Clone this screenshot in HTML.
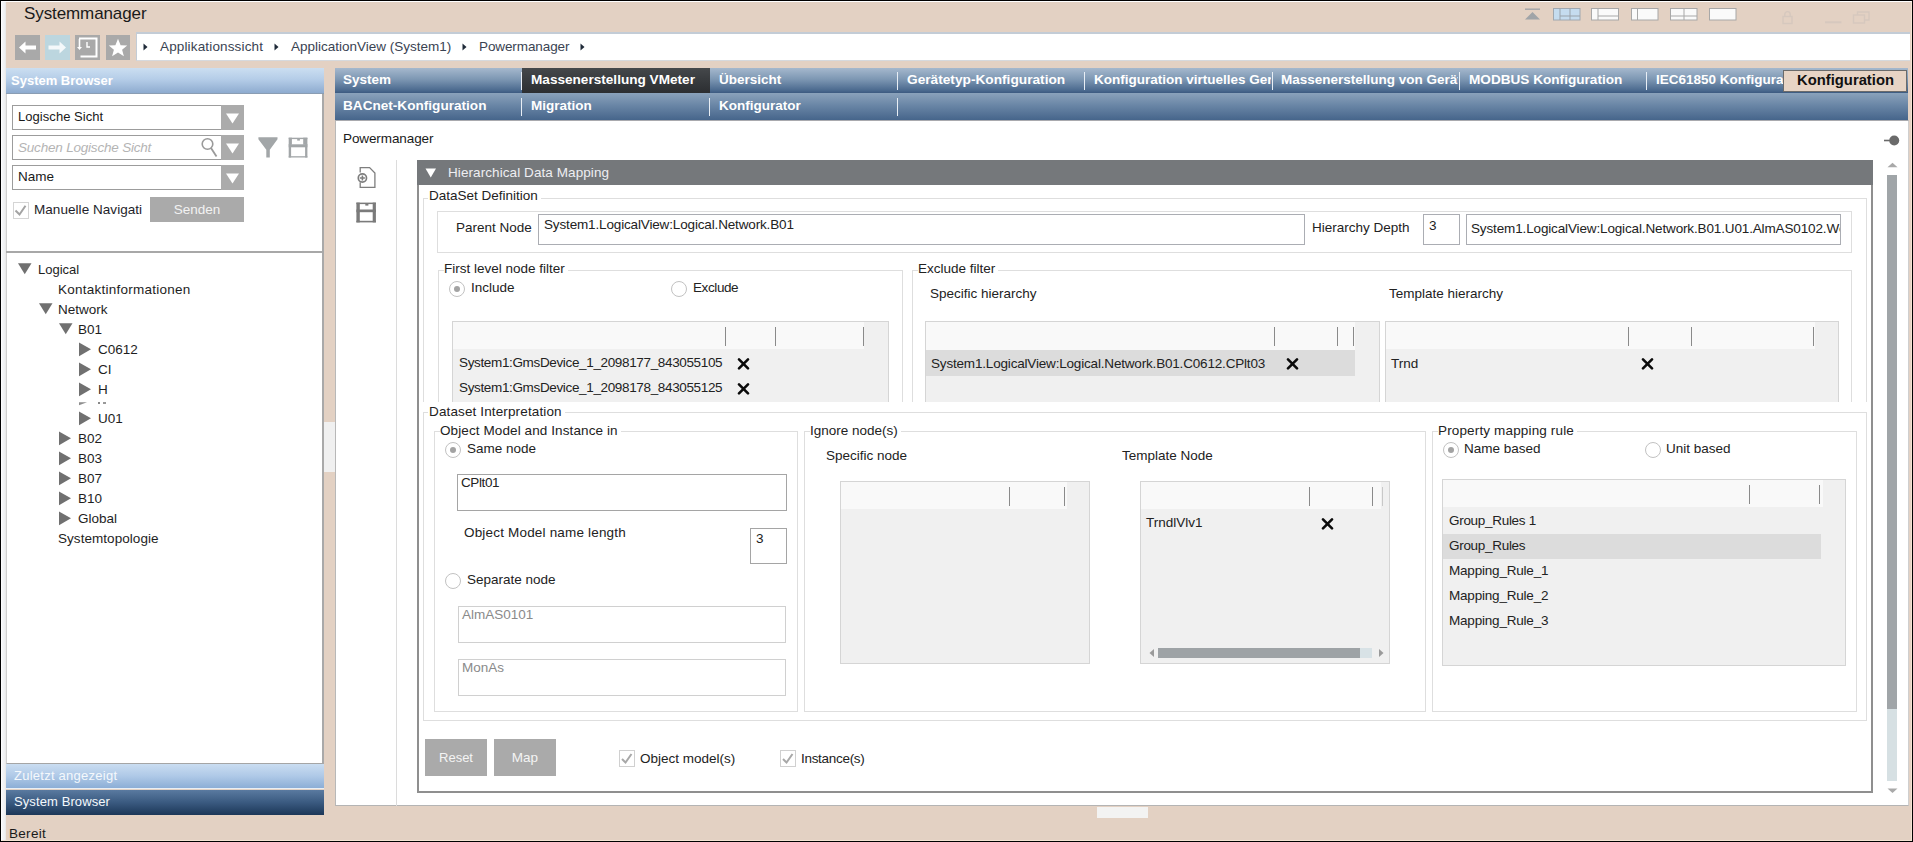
<!DOCTYPE html>
<html><head><meta charset="utf-8">
<style>
*{box-sizing:border-box;margin:0;padding:0}
html,body{width:1913px;height:842px;overflow:hidden;background:#000}
body{font-family:"Liberation Sans",sans-serif;font-size:13.5px;color:#222;position:relative}
.a{position:absolute}
.t{position:absolute;white-space:nowrap;line-height:1}
#win{position:absolute;left:1px;top:1px;width:1911px;height:840px;background:#E3D1C3;border-top:1px solid #fff;border-left:1px solid #fff;border-right:1px solid #F3E3D3;border-bottom:1px solid #F3E3D3}
.tabrow{position:absolute;background:linear-gradient(#A9BCD2,#7F98B6 50%,#3F5F87)}
.tab{position:absolute;top:0;height:100%;color:#fff;font-weight:bold;font-size:13.5px;line-height:25px;white-space:nowrap;overflow:hidden;padding-left:9px}
.sep{position:absolute;width:1px;background:#E8EEF5}
.grp{position:absolute;border:1px solid #DCDCDC}
.lbl{position:absolute;white-space:nowrap;line-height:16px;background:#fff;padding:0 2px 0 1px;color:#222}
.inp{position:absolute;border:1px solid #ABADB3;background:#fff}
.list{position:absolute;background:#F0F0F0;border:1px solid #D5D5D5}
.lhdr{position:absolute;left:0;top:0;background:#F9F9F9}
.csep{position:absolute;width:1px;background:#8A8A8A}
.x{position:absolute;width:12px;height:12px}
.radio{position:absolute;width:16px;height:16px;border:1.5px solid #C2C2C2;border-radius:50%;background:#fff}
.radio.on::after{content:"";position:absolute;left:3.5px;top:3.5px;width:6px;height:6px;border-radius:50%;background:#A3A3A3}
.btn{position:absolute;background:#AAAAAA;color:#F4F4F4;text-align:center}
</style></head><body>
<div id="win"></div>
<!-- title -->
<div class="t" style="left:24px;top:5px;font-size:17px;color:#1A1A1A;letter-spacing:-0.1px">Systemmanager</div>
<!-- top right icons -->
<svg class="a" style="left:1520px;top:5.5px" width="360" height="22" viewBox="0 0 360 22">
 <g fill="none" stroke-width="1.2">
  <rect x="5" y="2.5" width="15" height="1.4" fill="#A0A4A8" stroke="none"/>
  <path d="M5 13.5 L12.5 6 L20 13.5 Z" fill="#A0A4A8" stroke="none"/>
 </g>
 <rect x="33.5" y="2.5" width="26.5" height="11.5" fill="#C5DCEF" stroke="#A0A8B0"/>
 <path d="M40 2.5V14M50 2.5V14M40 10H60" stroke="#9AA3AB" stroke-width="1"/>
 <rect x="71.5" y="2.5" width="27" height="11.5" fill="#FAFAFA" stroke="#A8A8A8"/>
 <path d="M78 2.5V14M78 10H98.5" stroke="#A8A8A8" stroke-width="1"/>
 <rect x="111.5" y="2.5" width="26.5" height="11.5" fill="#FAFAFA" stroke="#A8A8A8"/>
 <path d="M117.5 2.5V14" stroke="#A8A8A8" stroke-width="1"/>
 <rect x="150.5" y="2.5" width="26.5" height="11.5" fill="#FAFAFA" stroke="#A8A8A8"/>
 <path d="M150.5 10H177M164 2.5V14" stroke="#A8A8A8" stroke-width="1"/>
 <rect x="189.5" y="2.5" width="26.5" height="11.5" fill="#FAFAFA" stroke="#A8A8A8"/>
 <g stroke="#D6C8BE" fill="none" stroke-width="1.4">
  <rect x="263" y="10.5" width="9" height="7"/>
  <path d="M264.8 10.5V8.3a2.7 2.7 0 0 1 5.4 0V10.5"/>
  <path d="M305 16.3H321.5" stroke-width="2"/>
  <rect x="333.5" y="9" width="11" height="8"/>
  <path d="M337.5 9V6H349V14H344.5"/>
 </g>
</svg>
<!-- nav buttons -->
<div class="a" style="left:15px;top:35px;width:25px;height:25px;background:#A9A9A9"></div>
<svg class="a" style="left:15px;top:35px" width="25" height="25"><path d="M4 12.5 L10.5 6.5 V10.5 H21 V14.5 H10.5 V18.5 Z" fill="#fff"/></svg>
<div class="a" style="left:45px;top:35px;width:25px;height:25px;background:#BCD6DF"></div>
<svg class="a" style="left:45px;top:35px" width="25" height="25"><path d="M21 12.5 L14.5 6.5 V10.5 H3.5 V14.5 H14.5 V18.5 Z" fill="#F4F8FA"/></svg>
<div class="a" style="left:75px;top:35px;width:25px;height:25px;background:#A9A9A9"></div>
<svg class="a" style="left:75px;top:35px" width="25" height="25"><path d="M4 3.5H21.5V21.5H5.5" fill="none" stroke="#fff" stroke-width="2"/><path d="M4.5 4V13" stroke="#fff" stroke-width="1.6"/><path d="M2 12H7L4.5 15Z" fill="#fff"/><path d="M12 7V12H15" fill="none" stroke="#fff" stroke-width="1.4"/></svg>
<div class="a" style="left:106px;top:35px;width:24px;height:25px;background:#A9A9A9"></div>
<svg class="a" style="left:106px;top:35px" width="24" height="25"><path d="M12 3.8 L14.6 10.2 L21.2 10.5 L16.1 14.7 L17.9 21.3 L12 17.6 L6.1 21.3 L7.9 14.7 L2.8 10.5 L9.4 10.2 Z" fill="#fff"/></svg>
<!-- breadcrumb -->
<div class="a" style="left:136px;top:32px;width:1774px;height:29px;background:#fff;border-top:2px solid #C3CCD6;border-left:1px solid #C3CCD6;border-bottom:1px solid #D6D9DD"></div>
<svg class="a" style="left:140px;top:40px" width="450" height="14" fill="#1F2A38">
 <path d="M3.5 3.5L7.5 7L3.5 10.5Z"/><path d="M134.5 3.5L138.5 7L134.5 10.5Z"/><path d="M322.5 3.5L326.5 7L322.5 10.5Z"/><path d="M440.5 3.5L444.5 7L440.5 10.5Z"/>
</svg>
<div class="t" style="left:160px;top:40px;color:#3A4352;letter-spacing:0.15px">Applikationssicht</div>
<div class="t" style="left:291px;top:40px;color:#3A4352;letter-spacing:0">ApplicationView (System1)</div>
<div class="t" style="left:479px;top:40px;color:#3A4352;letter-spacing:-0.1px">Powermanager</div>

<!-- left strip -->
<div class="a" style="left:1px;top:2px;width:5px;height:838px;background:linear-gradient(90deg,#fff,#F4F5F7 30%,#EDEFF1 80%,#E6E4E2)"></div>
<!-- left panel -->
<div class="a" style="left:6px;top:68px;width:318px;height:26px;background:linear-gradient(#CBDEF1,#B5CDE8 45%,#8EABCF);border-bottom:1px solid #8A9DB3"></div>
<div class="t" style="left:11px;top:74px;font-size:13px;font-weight:bold;color:#fff">System Browser</div>
<div class="a" style="left:6px;top:94px;width:318px;height:670px;background:#fff;border-left:1px solid #CFCFCF;border-right:2px solid #A9A9A9;border-bottom:1px solid #A5A5A5"></div>
<!-- dropdowns -->
<div class="a" style="left:12px;top:105px;width:232px;height:25px;background:#fff;border:1px solid #9C9C9C;border-width:1.5px 1px 1.5px 1.5px"></div>
<div class="a" style="left:221px;top:105px;width:23px;height:25px;background:#ABABAB"></div>
<svg class="a" style="left:221px;top:105px" width="23" height="25"><path d="M5 8.5H18L11.5 18.5Z" fill="#fff"/></svg>
<div class="t" style="left:18px;top:110px;color:#1A1A1A;font-size:13px;letter-spacing:0.05px">Logische Sicht</div>
<div class="a" style="left:12px;top:135px;width:232px;height:25px;background:#fff;border:1px solid #9C9C9C;border-width:1.5px 1px 1.5px 1.5px"></div>
<div class="a" style="left:221px;top:135px;width:23px;height:25px;background:#ABABAB"></div>
<svg class="a" style="left:221px;top:135px" width="23" height="25"><path d="M5 8.5H18L11.5 18.5Z" fill="#fff"/></svg>
<div class="t" style="left:18px;top:141px;color:#B4B4B4;font-style:italic;letter-spacing:-0.2px">Suchen Logische Sicht</div>
<svg class="a" style="left:198px;top:136px" width="22" height="24"><circle cx="9.5" cy="8" r="5.3" fill="none" stroke="#9A9A9A" stroke-width="1.6"/><path d="M13 12L18.5 20.5" stroke="#9A9A9A" stroke-width="1.8"/></svg>
<div class="a" style="left:12px;top:165px;width:232px;height:25px;background:#fff;border:1px solid #9C9C9C;border-width:1.5px 1px 1.5px 1.5px"></div>
<div class="a" style="left:221px;top:165px;width:23px;height:25px;background:#ABABAB"></div>
<svg class="a" style="left:221px;top:165px" width="23" height="25"><path d="M5 8.5H18L11.5 18.5Z" fill="#fff"/></svg>
<div class="t" style="left:18px;top:170px;color:#1A1A1A">Name</div>
<!-- filter & save -->
<svg class="a" style="left:256px;top:136px" width="60" height="24" fill="#A2A6A8">
 <path d="M2.4 1.3H21.5V3.3L13.8 13.8V21.5H10.3V13.8L2.4 3.3Z"/>
 <rect x="32.7" y="1.7" width="18.7" height="1.4"/>
 <rect x="32.7" y="1.7" width="3.2" height="7"/>
 <rect x="47.2" y="1.7" width="4.2" height="7"/>
 <rect x="32.7" y="8.3" width="2.4" height="13.2"/>
 <rect x="49.1" y="8.3" width="2.3" height="13.2"/>
 <rect x="32.7" y="8.3" width="18.7" height="3"/>
 <rect x="32.7" y="20.2" width="18.7" height="1.3"/>
 <rect x="41.2" y="3" width="2.7" height="1.6"/>
</svg>
<!-- checkbox row -->
<div class="a" style="left:13px;top:202px;width:16px;height:17px;border:1.2px solid #D5D5D5;background:#fff"></div>
<svg class="a" style="left:13px;top:202px" width="16" height="17"><path d="M2.5 8.5L6.5 12.5L12.5 3.8" fill="none" stroke="#A3A3A3" stroke-width="2"/></svg>
<div class="t" style="left:34px;top:203px;color:#1E1E2A;font-size:13.5px;letter-spacing:0.05px">Manuelle Navigati</div>
<div class="btn" style="left:150px;top:197px;width:94px;height:25px;line-height:25px;font-size:13.5px;color:#F2F2F2">Senden</div>
<div class="a" style="left:6px;top:251px;width:317px;height:1.5px;background:#A8A8A8"></div>
<!-- tree -->
<svg class="a" style="left:10px;top:258px" width="100" height="290" fill="#707070">
 <path d="M8 5.2H21.5L14.75 16.2Z"/>
 <path d="M29 45.2H42.5L35.75 56.2Z"/>
 <path d="M49 65.2H62.5L55.75 76.2Z"/>
 <path d="M69 84.5V98.2L81 91.35Z"/>
 <path d="M69 104.5V118.2L81 111.35Z"/>
 <path d="M69 124.5V138.2L81 131.35Z"/>
 <path d="M69 153.5V167.2L81 160.35Z"/>
 <path d="M69 144.2L77 144.2L69 147.2Z" opacity="0.8"/>
 <path d="M49 173.5V187.2L61 180.35Z"/>
 <path d="M49 193.5V207.2L61 200.35Z"/>
 <path d="M49 213.5V227.2L61 220.35Z"/>
 <path d="M49 233.5V247.2L61 240.35Z"/>
 <path d="M49 253.5V267.2L61 260.35Z"/>
</svg>
<div class="t" style="left:38px;top:263px;color:#1E1E1E;font-size:13px">Logical</div>
<div class="t" style="left:58px;top:283px;color:#1E1E1E;letter-spacing:0.25px">Kontaktinformationen</div>
<div class="t" style="left:58px;top:303px;color:#1E1E1E">Network</div>
<div class="t" style="left:78px;top:323px;color:#1E1E1E">B01</div>
<div class="t" style="left:98px;top:343px;color:#1E1E1E">C0612</div>
<div class="t" style="left:98px;top:363px;color:#1E1E1E">CI</div>
<div class="t" style="left:98px;top:383px;color:#1E1E1E">H</div>
<div class="a" style="left:98px;top:402px;width:2px;height:1.5px;background:#888"></div>
<div class="a" style="left:103px;top:402px;width:3px;height:1.5px;background:#999"></div>
<div class="t" style="left:98px;top:412px;color:#1E1E1E">U01</div>
<div class="t" style="left:78px;top:432px;color:#1E1E1E">B02</div>
<div class="t" style="left:78px;top:452px;color:#1E1E1E">B03</div>
<div class="t" style="left:78px;top:472px;color:#1E1E1E">B07</div>
<div class="t" style="left:78px;top:492px;color:#1E1E1E">B10</div>
<div class="t" style="left:78px;top:512px;color:#1E1E1E">Global</div>
<div class="t" style="left:58px;top:532px;color:#1E1E1E;letter-spacing:0.05px">Systemtopologie</div>
<!-- splitter grip -->
<div class="a" style="left:324px;top:422px;width:11px;height:50px;background:#F0F0F0"></div>
<!-- bottom accordion -->
<div class="a" style="left:6px;top:764px;width:318px;height:25px;background:linear-gradient(#CADDF1,#AFC9E7 50%,#8CAED6);border-bottom:1px solid #E8EEF4"></div>
<div class="t" style="left:14px;top:769px;font-size:13px;color:#F4F8FC;letter-spacing:0.25px">Zuletzt angezeigt</div>
<div class="a" style="left:6px;top:790px;width:318px;height:25px;background:linear-gradient(#5A7AA0,#3A5A80 50%,#1C3758)"></div>
<div class="t" style="left:14px;top:795px;font-size:13px;color:#F4F8FC;letter-spacing:0.1px">System Browser</div>
<div class="t" style="left:9px;top:827px;font-size:13.5px;color:#1A1A1A;letter-spacing:0.3px">Bereit</div>

<!-- tabs -->
<div class="tabrow" style="left:335px;top:68px;width:1573px;height:25px;background:linear-gradient(#A5B8CD,#7D97B3 45%,#4A698E 90%,#3C5A80)"></div>
<div class="tabrow" style="left:335px;top:93px;width:1573px;height:27px;background:linear-gradient(#8AA2BB,#6A86A6 45%,#46658B)"></div>
<div class="a" style="left:522px;top:68px;width:188px;height:25px;background:linear-gradient(#45484B,#35383B 60%,#2C2E31)"></div>
<div class="a" style="left:1783px;top:70px;width:124px;height:22px;background:#E7D4C5;border:1px solid #6B6B6B"></div>
<div class="t" style="left:1797px;top:73px;font-size:14.8px;font-weight:bold;color:#111">Konfiguration</div>
<div class="sep" style="left:521px;top:72px;height:18px"></div>
<div class="sep" style="left:897px;top:72px;height:18px"></div>
<div class="sep" style="left:1084px;top:72px;height:18px"></div>
<div class="sep" style="left:1272px;top:72px;height:18px"></div>
<div class="sep" style="left:1459px;top:72px;height:18px"></div>
<div class="sep" style="left:1646px;top:72px;height:18px"></div>
<div class="sep" style="left:521px;top:98px;height:18px"></div>
<div class="sep" style="left:709px;top:98px;height:18px"></div>
<div class="sep" style="left:897px;top:98px;height:18px"></div>
<div class="t" style="left:343px;top:73px;font-size:13.5px;font-weight:bold;color:#fff">System</div>
<div class="t" style="left:531px;top:73px;font-size:13.6px;font-weight:bold;color:#fff">Massenerstellung VMeter</div>
<div class="t" style="left:719px;top:73px;font-size:13.5px;font-weight:bold;color:#fff">Übersicht</div>
<div class="t" style="left:907px;top:73px;font-size:13.7px;font-weight:bold;color:#fff">Gerätetyp-Konfiguration</div>
<div class="t" style="left:1094px;top:73px;width:177px;overflow:hidden;font-size:13.5px;font-weight:bold;color:#fff">Konfiguration virtuelles Geräte</div>
<div class="t" style="left:1281px;top:73px;width:177px;overflow:hidden;font-size:13.5px;font-weight:bold;color:#fff">Massenerstellung von Geräten</div>
<div class="t" style="left:1469px;top:73px;font-size:13.6px;font-weight:bold;color:#fff">MODBUS Konfiguration</div>
<div class="t" style="left:1656px;top:73px;width:127px;overflow:hidden;font-size:13.5px;font-weight:bold;color:#fff">IEC61850 Konfiguration</div>
<div class="t" style="left:343px;top:99px;font-size:13.6px;font-weight:bold;color:#fff">BACnet-Konfiguration</div>
<div class="t" style="left:531px;top:99px;font-size:13.5px;font-weight:bold;color:#fff">Migration</div>
<div class="t" style="left:719px;top:99px;font-size:13.5px;font-weight:bold;color:#fff">Konfigurator</div>

<!-- content panel -->
<div class="a" style="left:335px;top:120px;width:1574px;height:686px;background:#fff;border-top:1px solid #A9AAAE;border-left:1px solid #B8B8B8;border-right:1px solid #CFCFCF;border-bottom:1.5px solid #B4B4B4"></div>
<div class="t" style="left:343px;top:132px;color:#1A1A1A;letter-spacing:-0.1px">Powermanager</div>
<svg class="a" style="left:352px;top:164px" width="30" height="64">
 <path d="M8.2 8.5V3.6H17.6L22.9 9.1V23.3H8.2V18.2" fill="none" stroke="#7E7E7E" stroke-width="1.3"/>
 <circle cx="10.4" cy="14" r="4.1" fill="#fff" stroke="#7E7E7E" stroke-width="1.7"/>
 <path d="M7.9 14H12.9M10.4 11.5V16.5" stroke="#7E7E7E" stroke-width="1.6"/>
 <g fill="#7B7B7B">
 <rect x="4.4" y="38.6" width="19.5" height="1.5"/>
 <rect x="4.4" y="38.6" width="3.4" height="19.8"/>
 <rect x="20.7" y="38.6" width="3.2" height="19.8"/>
 <rect x="4.4" y="45.5" width="19.5" height="2.7"/>
 <rect x="4.4" y="56.8" width="19.5" height="1.6"/>
 <rect x="13.3" y="40" width="3.1" height="1.6"/>
 </g>
</svg>
<div class="a" style="left:396px;top:160px;width:1px;height:646px;background:#DCDCDC"></div>
<!-- pin & scrollbar -->
<svg class="a" style="left:1880px;top:132px" width="22" height="40"><path d="M4 8.5H11" stroke="#6A6A6A" stroke-width="1.6"/><circle cx="14.2" cy="8.5" r="5" fill="#6A6A6A"/><path d="M7.5 35.2L12.5 30.7L17.5 35.2Z" fill="#A9A9A9"/></svg>
<div class="a" style="left:1887px;top:175px;width:10px;height:534px;background:#A0A5A8"></div>
<div class="a" style="left:1887px;top:709px;width:10px;height:72px;background:#D6E0E3"></div>
<svg class="a" style="left:1880px;top:784px" width="22" height="12"><path d="M7.5 4.5L12.5 9L17.5 4.5Z" fill="#A9A9A9"/></svg>
<!-- bottom splitter grip -->
<div class="a" style="left:1097px;top:807px;width:51px;height:11px;background:#F3F3F2"></div>
<!-- HDM panel -->
<div class="a" style="left:417px;top:160px;width:1456px;height:633px;border:2px solid #8F8F8F;border-top:none;background:#fff"></div>
<div class="a" style="left:417px;top:160px;width:1456px;height:25px;background:#75787B"></div>
<svg class="a" style="left:420px;top:164px" width="20" height="18"><path d="M5.5 4.5H16L10.75 13.5Z" fill="#fff"/></svg>
<div class="t" style="left:448px;top:166px;color:#EEEEF2;letter-spacing:0.08px">Hierarchical Data Mapping</div>
<!-- DataSet Definition -->
<div class="a" style="left:423px;top:198px;width:1444px;height:204px;border:1px solid #DEDEDE;border-bottom:none"></div>
<div class="lbl" style="left:428px;top:189px;line-height:1;padding:0 3px 0 1px">DataSet Definition</div>
<div class="a" style="left:437px;top:211px;width:1415px;height:42px;border:1.5px solid #DEDEDE"></div>
<div class="t" style="left:456px;top:221px">Parent Node</div>
<div class="inp" style="left:538px;top:214px;width:767px;height:31px"></div>
<div class="t" style="left:544px;top:218px;letter-spacing:-0.15px">System1.LogicalView:Logical.Network.B01</div>
<div class="t" style="left:1312px;top:221px">Hierarchy Depth</div>
<div class="inp" style="left:1423px;top:214px;width:37px;height:31px"></div>
<div class="t" style="left:1429px;top:219px">3</div>
<div class="inp" style="left:1466px;top:214px;width:375px;height:31px;overflow:hidden"><div class="t" style="left:4px;top:7px;letter-spacing:-0.14px">System1.LogicalView:Logical.Network.B01.U01.AlmAS0102.Wc</div></div>
<!-- First level node filter -->
<div class="a" style="left:438px;top:270px;width:465px;height:132px;border:1px solid #DEDEDE;border-bottom:none"></div>
<div class="lbl" style="left:444px;top:262px;line-height:1;padding:0 3px 0 0">First level node filter</div>
<div class="radio on" style="left:449px;top:281px"></div>
<div class="t" style="left:471px;top:281px">Include</div>
<div class="radio" style="left:671px;top:281px"></div>
<div class="t" style="left:693px;top:281px;letter-spacing:-0.4px">Exclude</div>
<div class="list" style="left:452px;top:321px;width:437px;height:81px;border-bottom:none">
 <div class="lhdr" style="width:411px;height:27px"></div>
 <div class="csep" style="left:272px;top:5px;height:19px"></div>
 <div class="csep" style="left:322px;top:5px;height:19px"></div>
 <div class="csep" style="left:410px;top:5px;height:19px"></div>
</div>
<div class="t" style="left:459px;top:356px;letter-spacing:-0.35px">System1:GmsDevice_1_2098177_843055105</div>
<div class="t" style="left:459px;top:381px;letter-spacing:-0.35px">System1:GmsDevice_1_2098178_843055125</div>
<svg class="a" style="left:737px;top:357px" width="13" height="38" stroke="#0A0A0A" stroke-width="2.6" stroke-linecap="round"><path d="M2 2.3L11 11.3M11 2.3L2 11.3"/><path d="M2 27.3L11 36.3M11 27.3L2 36.3"/></svg>
<!-- Exclude filter -->
<div class="a" style="left:912px;top:270px;width:940px;height:132px;border:1px solid #DEDEDE;border-bottom:none"></div>
<div class="lbl" style="left:918px;top:262px;line-height:1;padding:0 3px 0 0">Exclude filter</div>
<div class="t" style="left:930px;top:287px">Specific hierarchy</div>
<div class="t" style="left:1389px;top:287px">Template hierarchy</div>
<div class="list" style="left:925px;top:321px;width:455px;height:81px;border-bottom:none">
 <div class="lhdr" style="width:429px;height:28px"></div>
 <div class="a" style="left:0;top:28px;width:429px;height:26px;background:#DCDCDC"></div>
 <div class="csep" style="left:348px;top:5px;height:19px"></div>
 <div class="csep" style="left:411px;top:5px;height:19px"></div>
 <div class="csep" style="left:427px;top:5px;height:19px"></div>
</div>
<div class="t" style="left:931px;top:357px;letter-spacing:-0.18px">System1.LogicalView:Logical.Network.B01.C0612.CPlt03</div>
<svg class="a" style="left:1286px;top:357px" width="13" height="13" stroke="#0A0A0A" stroke-width="2.6" stroke-linecap="round"><path d="M2 2.3L11 11.3M11 2.3L2 11.3"/></svg>
<div class="list" style="left:1385px;top:321px;width:454px;height:81px;border-bottom:none">
 <div class="lhdr" style="width:429px;height:27px"></div>
 <div class="csep" style="left:242px;top:5px;height:19px"></div>
 <div class="csep" style="left:305px;top:5px;height:19px"></div>
 <div class="csep" style="left:427px;top:5px;height:19px"></div>
</div>
<div class="t" style="left:1391px;top:357px">Trnd</div>
<svg class="a" style="left:1641px;top:357px" width="13" height="13" stroke="#0A0A0A" stroke-width="2.6" stroke-linecap="round"><path d="M2 2.3L11 11.3M11 2.3L2 11.3"/></svg>
<!-- Dataset Interpretation -->
<div class="a" style="left:423px;top:412px;width:1444px;height:309px;border:1px solid #DEDEDE"></div>
<div class="lbl" style="left:428px;top:405px;line-height:1;padding:0 3px 0 1px;letter-spacing:0.13px">Dataset Interpretation</div>
<!-- Object Model -->
<div class="a" style="left:434px;top:431px;width:364px;height:281px;border:1px solid #DEDEDE"></div>
<div class="lbl" style="left:440px;top:424px;line-height:1;padding:0 3px 0 0;letter-spacing:0.1px">Object Model and Instance in</div>
<div class="radio on" style="left:445px;top:442px"></div>
<div class="t" style="left:467px;top:442px">Same node</div>
<div class="inp" style="left:457px;top:474px;width:330px;height:37px;border-color:#A5A5A5"></div>
<div class="t" style="left:461px;top:476px;letter-spacing:-0.4px">CPlt01</div>
<div class="t" style="left:464px;top:526px;letter-spacing:0.18px">Object Model name length</div>
<div class="inp" style="left:750px;top:528px;width:37px;height:36px;border-color:#A5A5A5"></div>
<div class="t" style="left:756px;top:532px">3</div>
<div class="radio" style="left:445px;top:573px"></div>
<div class="t" style="left:467px;top:573px">Separate node</div>
<div class="inp" style="left:458px;top:606px;width:328px;height:37px;border-color:#D0D0D0"></div>
<div class="t" style="left:462px;top:608px;color:#8A8A8A">AlmAS0101</div>
<div class="inp" style="left:458px;top:659px;width:328px;height:37px;border-color:#D0D0D0"></div>
<div class="t" style="left:462px;top:661px;color:#8A8A8A">MonAs</div>
<!-- Ignore nodes -->
<div class="a" style="left:804px;top:431px;width:622px;height:281px;border:1px solid #DEDEDE"></div>
<div class="lbl" style="left:810px;top:424px;line-height:1;padding:0 3px 0 0">Ignore node(s)</div>
<div class="t" style="left:826px;top:449px">Specific node</div>
<div class="t" style="left:1122px;top:449px">Template Node</div>
<div class="list" style="left:840px;top:481px;width:250px;height:183px">
 <div class="lhdr" style="width:226px;height:27px"></div>
 <div class="csep" style="left:168px;top:5px;height:19px"></div>
 <div class="csep" style="left:223px;top:5px;height:19px"></div>
</div>
<div class="list" style="left:1140px;top:481px;width:250px;height:183px">
 <div class="lhdr" style="width:240px;height:27px"></div>
 <div class="csep" style="left:168px;top:5px;height:19px"></div>
 <div class="csep" style="left:231px;top:5px;height:19px"></div>
 <div class="csep" style="left:241px;top:5px;height:19px;background:#C8C8C8"></div>
 <div class="a" style="left:17px;top:166px;width:202px;height:10px;background:#9EA3A6"></div>
 <div class="a" style="left:219px;top:166px;width:12px;height:10px;background:#D8E2E6"></div>
 <svg class="a" style="left:4px;top:165px" width="240" height="12" fill="#9A9A9A"><path d="M9 2L4.5 6L9 10Z"/><path d="M234 2L238.5 6L234 10Z"/></svg>
</div>
<div class="t" style="left:1146px;top:516px">TrndlVlv1</div>
<svg class="a" style="left:1321px;top:517px" width="13" height="13" stroke="#0A0A0A" stroke-width="2.6" stroke-linecap="round"><path d="M2 2.3L11 11.3M11 2.3L2 11.3"/></svg>
<!-- Property mapping rule -->
<div class="a" style="left:1432px;top:431px;width:425px;height:281px;border:1px solid #DEDEDE"></div>
<div class="lbl" style="left:1438px;top:424px;line-height:1;padding:0 3px 0 0;letter-spacing:0.15px">Property mapping rule</div>
<div class="radio on" style="left:1443px;top:442px"></div>
<div class="t" style="left:1464px;top:442px">Name based</div>
<div class="radio" style="left:1645px;top:442px"></div>
<div class="t" style="left:1666px;top:442px">Unit based</div>
<div class="list" style="left:1442px;top:479px;width:404px;height:187px">
 <div class="lhdr" style="width:380px;height:27px"></div>
 <div class="a" style="left:0;top:54px;width:378px;height:25px;background:#DCDCDC"></div>
 <div class="csep" style="left:306px;top:5px;height:19px"></div>
 <div class="csep" style="left:376px;top:5px;height:19px"></div>
</div>
<div class="t" style="left:1449px;top:514px;letter-spacing:-0.3px">Group_Rules 1</div>
<div class="t" style="left:1449px;top:539px;letter-spacing:-0.3px">Group_Rules</div>
<div class="t" style="left:1449px;top:564px;letter-spacing:-0.2px">Mapping_Rule_1</div>
<div class="t" style="left:1449px;top:589px;letter-spacing:-0.2px">Mapping_Rule_2</div>
<div class="t" style="left:1449px;top:614px;letter-spacing:-0.2px">Mapping_Rule_3</div>
<!-- bottom buttons -->
<div class="btn" style="left:425px;top:739px;width:62px;height:37px;line-height:37px;font-size:13px">Reset</div>
<div class="btn" style="left:494px;top:739px;width:62px;height:37px;line-height:37px">Map</div>
<div class="a" style="left:619px;top:750px;width:16px;height:17px;border:1.2px solid #D0D0D0;background:#fff"></div>
<svg class="a" style="left:619px;top:750px" width="16" height="17"><path d="M3 9L6.5 12.5L12.5 4" fill="none" stroke="#A8A8A8" stroke-width="2"/></svg>
<div class="t" style="left:640px;top:752px">Object model(s)</div>
<div class="a" style="left:780px;top:750px;width:16px;height:17px;border:1.2px solid #D0D0D0;background:#fff"></div>
<svg class="a" style="left:780px;top:750px" width="16" height="17"><path d="M3 9L6.5 12.5L12.5 4" fill="none" stroke="#A8A8A8" stroke-width="2"/></svg>
<div class="t" style="left:801px;top:752px;letter-spacing:-0.3px">Instance(s)</div>



<!--CONTENT-->

</body></html>
